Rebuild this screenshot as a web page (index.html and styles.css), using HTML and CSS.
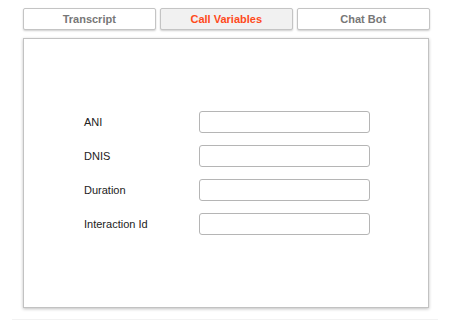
FILE: index.html
```html
<!DOCTYPE html>
<html lang="en">
<head>
  <meta charset="UTF-8" />
  <title>Call Variables</title>
  <link rel="stylesheet" href="styles.css">
</head>
<body>

  <div class="tabs">
    <button class="tab">Transcript</button>
    <button class="tab active">Call Variables</button>
    <button class="tab">Chat Bot</button>
  </div>

  <div class="panel">
    <div class="var-form">
      <label>ANI</label>
      <input type="text">
      <label>DNIS</label>
      <input type="text">
      <label>Duration</label>
      <input type="text">
      <label>Interaction Id</label>
      <input type="text">
    </div>
  </div>

  <div class="footer-line"></div>

</body>
</html>
```

FILE: styles.css
```css
* { box-sizing: border-box; }
body {
  font-family: 'Liberation Sans', Arial, sans-serif;
  margin: 0;
  background: #fff;
  color: #222;
  width: 450px;
  height: 320px;
  overflow: hidden;
}

.tabs {
  display: flex;
  gap: 4.5px;
  padding: 8px 0 0 23px;
}

.tab {
  width: 132.5px;
  height: 22px;
  background: #fff;
  border: 1px solid #c4c4c4;
  border-radius: 2px;
  box-shadow: 0 1px 2px rgba(0,0,0,0.2);
  font-family: inherit;
  font-size: 11px;
  font-weight: bold;
  color: #777;
  padding: 0;
  cursor: pointer;
}

.tab.active {
  background: #f1f1f1;
  color: #ff4a1c;
}

.panel {
  margin: 8px 0 0 23px;
  width: 406px;
  height: 270px;
  border: 1px solid #c2c2c2;
  box-shadow: 0 1px 3px rgba(0,0,0,0.25);
  background: #fff;
  padding: 72px 0 0 60px;
}

.var-form {
  display: grid;
  grid-template-columns: 115px 171px;
  row-gap: 12px;
  align-items: center;
}

.var-form label {
  font-size: 11px;
  color: #222;
}

.var-form input {
  height: 22px;
  border: 1px solid #b5b5b5;
  border-radius: 3px;
  background: #fff;
}

.footer-line {
  margin: 11px 12px 0;
  border-top: 1px solid #f2f2f2;
}
```
